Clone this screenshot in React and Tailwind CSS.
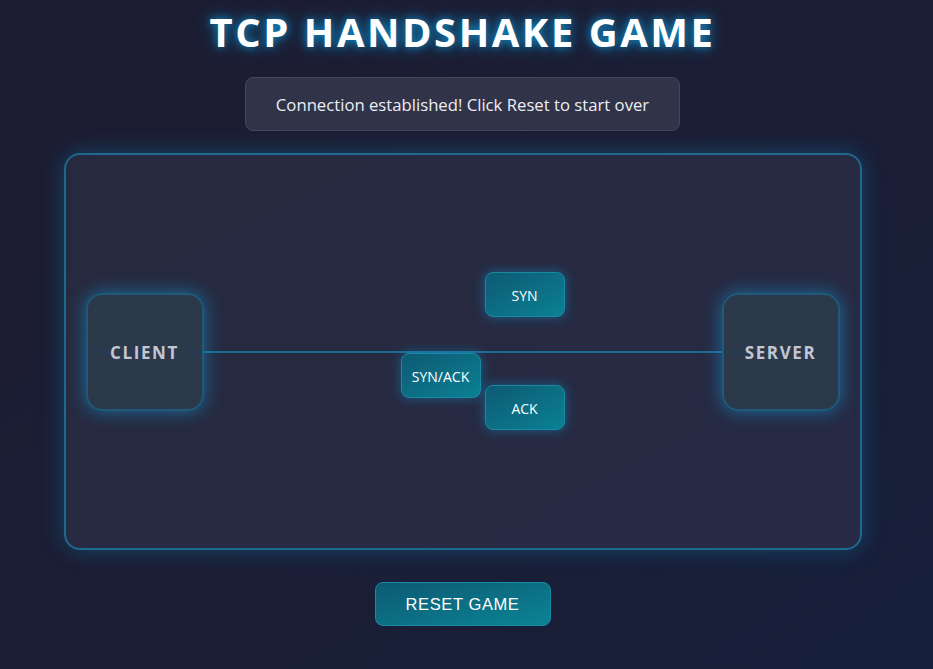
const packets = [
  { label: "SYN", className: "left-[419px] top-[117px]" },
  { label: "SYN/ACK", className: "left-[335px] top-[198px]" },
  { label: "ACK", className: "left-[419px] top-[230px]" },
];

const App = () => {
  return (
    <div className="min-h-screen w-full bg-gradient-to-br from-[#1c1c31] via-[#1b1e35] to-[#161f3b] font-['Open_Sans',sans-serif] text-white">
      <div className="w-[925px] flex flex-col items-center pt-[8px]">
        <h1 className="text-[40px] font-bold tracking-[2.5px] leading-[48px] text-white [text-shadow:0_0_10px_rgba(14,165,233,0.85),0_0_20px_rgba(14,165,233,0.45)]">
          TCP HANDSHAKE GAME
        </h1>

        <div className="mt-[21px] w-[435px] h-[54px] flex items-center justify-center rounded-lg bg-[#313348] border border-[#45475c] text-[16.7px] text-[#eceef4] pt-[1px]">
          Connection established! Click Reset to start over
        </div>

        <div className="relative mt-[22px] w-[798px] h-[397px] rounded-2xl border-2 border-[#1d6a8f] bg-gradient-to-br from-[#272a3e] to-[#262a45] shadow-[0_0_22px_rgba(14,140,200,0.35)] flex items-center justify-between px-[20px]">
          <div className="absolute left-[20px] right-[20px] top-[196px] h-[2px] bg-[#1c6a92]" />

          <div className="relative z-10 w-[118px] h-[118px] rounded-2xl border-2 border-[#1f5a7a] bg-[#2b3a4c]/95 flex items-center justify-center pt-[3px] shadow-[0_0_18px_rgba(14,165,233,0.55)]">
            <span className="text-[17px] font-bold tracking-[1.6px] text-[#c2c6d2]">CLIENT</span>
          </div>

          {packets.map((p) => (
            <div
              key={p.label}
              className={`absolute z-20 w-[80px] h-[45px] rounded-lg border border-[#1a8aa3] bg-gradient-to-br from-[#0d5a74] to-[#0a8193] flex items-center justify-center pt-[2px] text-[14px] text-white shadow-[0_0_12px_rgba(14,165,233,0.45)] ${p.className}`}
            >
              {p.label}
            </div>
          ))}

          <div className="relative z-10 w-[118px] h-[118px] rounded-2xl border-2 border-[#1f5a7a] bg-[#2b3a4c]/95 flex items-center justify-center pt-[3px] shadow-[0_0_18px_rgba(14,165,233,0.55)]">
            <span className="text-[17px] font-bold tracking-[1.6px] text-[#c2c6d2]">SERVER</span>
          </div>
        </div>

        <button className="mt-[32px] w-[176px] h-[44px] rounded-lg border border-[#1a8aa3] bg-gradient-to-br from-[#0d5a74] to-[#0a8494] font-['Liberation_Sans',sans-serif] text-[16.5px] tracking-[0.6px] text-white pt-[1px]">
          RESET GAME
        </button>
      </div>
    </div>
  );
};

export default App;
